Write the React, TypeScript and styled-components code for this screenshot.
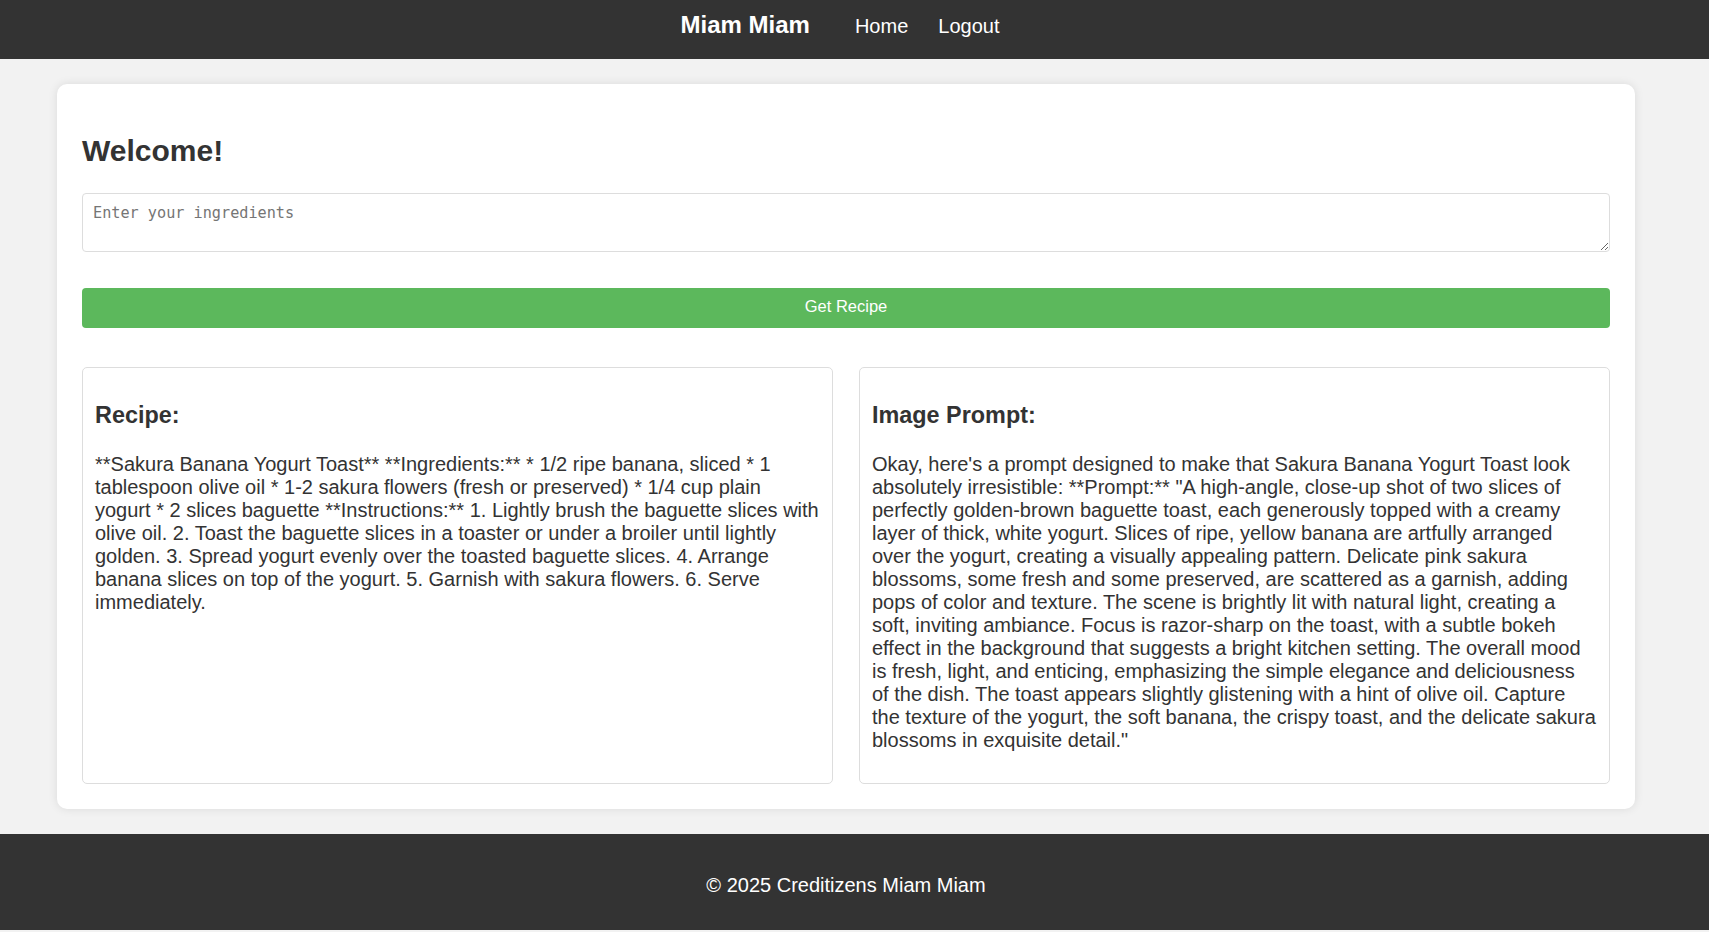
import React from "react";
import styled, { createGlobalStyle } from "styled-components";

const GlobalStyle = createGlobalStyle`
  html, body {
    margin: 0;
    padding: 0;
    background: #f2f2f2;
    font-family: "Liberation Sans", Arial, sans-serif;
    color: #333;
  }
  * { box-sizing: border-box; }
`;

const Header = styled.header`
  background: #333;
  height: 59px;
  padding: 11px 17px 0 0;
  display: flex;
  justify-content: center;
  align-items: baseline;
`;

const Brand = styled.div`
  font-size: 24px;
  font-weight: bold;
  color: #fff;
  margin-right: 45px;
`;

const NavLinks = styled.nav`
  display: flex;
  gap: 30px;
  padding-right: 12px;
`;

const NavLink = styled.a`
  color: #fff;
  font-size: 20px;
  text-decoration: none;
  cursor: pointer;
`;

const Card = styled.main`
  background: #fff;
  margin: 25px 74px 25px 57px;
  padding: 25px;
  border-radius: 10px;
  box-shadow: 0 0 10px rgba(0, 0, 0, 0.1);
`;

const Title = styled.h1`
  font-size: 30px;
  line-height: 37px;
  font-weight: bold;
  margin: 23px 0 24px;
  color: #333;
`;

const Ingredients = styled.textarea`
  display: block;
  width: 100%;
  height: 59px;
  padding: 10px;
  border: 1px solid #ddd;
  border-radius: 4px;
  font-family: "DejaVu Sans Mono", "Liberation Mono", monospace;
  font-size: 15.2px;
  color: #333;
  margin: 0 0 36px;
  resize: vertical;
  &::placeholder {
    color: #757575;
  }
`;

const SubmitButton = styled.button`
  display: block;
  width: 100%;
  height: 40px;
  padding: 0 0 4px;
  background: #5cb85c;
  color: #fff;
  border: none;
  border-radius: 4px;
  font-family: "Liberation Sans", Arial, sans-serif;
  font-size: 16.5px;
  cursor: pointer;
  margin: 0 0 39px;
`;

const Results = styled.section`
  display: grid;
  grid-template-columns: 1fr 1fr;
  gap: 26px;
`;

const ResultBox = styled.div`
  border: 1px solid #ddd;
  border-radius: 5px;
  padding: 11px 13px 11px 12px;
  font-size: 20px;
  color: #333;
`;

const ResultTitle = styled.h3`
  font-size: 1.17em;
  font-weight: bold;
  margin: 1em 0;
`;

const ResultText = styled.p`
  margin: 20px 0;
  line-height: 23px;
`;

const Footer = styled.footer`
  background: #333;
  color: #fff;
  height: 96px;
  padding: 40px 17px 0 0;
  text-align: center;
  font-size: 20px;
`;

const recipe =
  "**Sakura Banana Yogurt Toast** **Ingredients:** * 1/2 ripe banana, sliced * 1 tablespoon olive oil * 1-2 sakura flowers (fresh or preserved) * 1/4 cup plain yogurt * 2 slices baguette **Instructions:** 1. Lightly brush the baguette slices with olive oil. 2. Toast the baguette slices in a toaster or under a broiler until lightly golden. 3. Spread yogurt evenly over the toasted baguette slices. 4. Arrange banana slices on top of the yogurt. 5. Garnish with sakura flowers. 6. Serve immediately.";

const prompt =
  "Okay, here's a prompt designed to make that Sakura Banana Yogurt Toast look absolutely irresistible: **Prompt:** \"A high-angle, close-up shot of two slices of perfectly golden-brown baguette toast, each generously topped with a creamy layer of thick, white yogurt. Slices of ripe, yellow banana are artfully arranged over the yogurt, creating a visually appealing pattern. Delicate pink sakura blossoms, some fresh and some preserved, are scattered as a garnish, adding pops of color and texture. The scene is brightly lit with natural light, creating a soft, inviting ambiance. Focus is razor-sharp on the toast, with a subtle bokeh effect in the background that suggests a bright kitchen setting. The overall mood is fresh, light, and enticing, emphasizing the simple elegance and deliciousness of the dish. The toast appears slightly glistening with a hint of olive oil. Capture the texture of the yogurt, the soft banana, the crispy toast, and the delicate sakura blossoms in exquisite detail.\"";

export default function App() {
  return (
    <>
      <GlobalStyle />
      <Header>
        <Brand>Miam Miam</Brand>
        <NavLinks>
          <NavLink>Home</NavLink>
          <NavLink>Logout</NavLink>
        </NavLinks>
      </Header>
      <Card>
        <Title>Welcome!</Title>
        <Ingredients placeholder="Enter your ingredients" />
        <SubmitButton>Get Recipe</SubmitButton>
        <Results>
          <ResultBox>
            <ResultTitle>Recipe:</ResultTitle>
            <ResultText>{recipe}</ResultText>
          </ResultBox>
          <ResultBox>
            <ResultTitle>Image Prompt:</ResultTitle>
            <ResultText>{prompt}</ResultText>
          </ResultBox>
        </Results>
      </Card>
      <Footer>© 2025 Creditizens Miam Miam</Footer>
    </>
  );
}
